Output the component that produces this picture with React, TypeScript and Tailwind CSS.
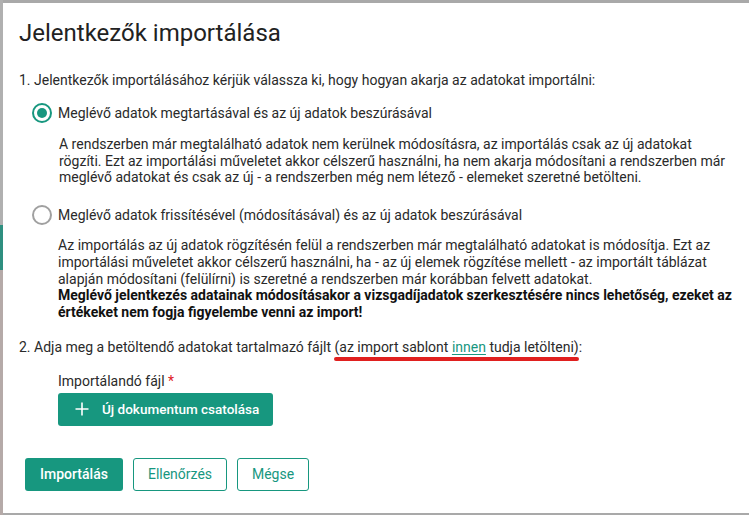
import React from "react";

function Radio({ checked }: { checked?: boolean }) {
  return (
    <span
      className={
        "flex h-[20px] w-[20px] shrink-0 items-center justify-center rounded-full border-2 " +
        (checked ? "border-[#17977f]" : "border-[#a0a0a0]")
      }
    >
      {checked && <span className="h-[10px] w-[10px] rounded-full bg-[#17977f]" />}
    </span>
  );
}

export default function App() {
  return (
    <div
      className="relative flex h-[515px] w-[749px] overflow-hidden bg-[#a9a9a9]"
      style={{ fontFamily: "Roboto, 'Liberation Sans', sans-serif" }}
    >
      <div className="flex w-[3px] shrink-0 flex-col">
        <div className="h-[225px] bg-[#b0b0b0]" />
        <div className="h-[45px] bg-[#2f8f80]" />
        <div className="flex-1 bg-[#b5aaa8]" />
      </div>
      <div className="mt-[3px] mb-[2px] flex flex-1 flex-col bg-white pl-[16px] pr-[8px] pt-[16px] text-[14px] text-[#2a2a2a]">
        <h1 className="text-[24px] leading-[28px] font-normal text-[#222]">Jelentkezők importálása</h1>

        <p className="mt-[25px] leading-[16px]">
          1. Jelentkezők importálásához kérjük válassza ki, hogy hogyan akarja az adatokat importálni:
        </p>

        <div className="mt-[15px] flex items-center gap-[6px] pl-[13px]">
          <Radio checked />
          <span className="leading-[16px]">Meglévő adatok megtartásával és az új adatok beszúrásával</span>
        </div>
        <p className="mt-[13px] pl-[40px] leading-[16.7px]">
          A rendszerben már megtalálható adatok nem kerülnek módosításra, az importálás csak az új adatokat
          <br />
          rögzíti. Ezt az importálási műveletet akkor célszerű használni, ha nem akarja módosítani a rendszerben már
          <br />
          meglévő adatokat és csak az új - a rendszerben még nem létező - elemeket szeretné betölteni.
        </p>

        <div className="mt-[19px] flex items-center gap-[6px] pl-[13px]">
          <Radio />
          <span className="leading-[16px]">Meglévő adatok frissítésével (módosításával) és az új adatok beszúrásával</span>
        </div>
        <div className="mt-[12px] pl-[39px] leading-[16.7px]">
          <p>
            Az importálás az új adatok rögzítésén felül a rendszerben már megtalálható adatokat is módosítja. Ezt az
            importálási műveletet akkor célszerű használni, ha - az új elemek rögzítése mellett - az importált táblázat
            alapján módosítani (felülírni) is szeretné a rendszerben már korábban felvett adatokat.
          </p>
          <p className="font-bold text-[#111]">
            Meglévő jelentkezés adatainak módosításakor a vizsgadíjadatok szerkesztésére nincs lehetőség, ezeket az
            értékeket nem fogja figyelembe venni az import!
          </p>
        </div>

        <p className="mt-[18px] leading-[16px]">
          2. Adja meg a betöltendő adatokat tartalmazó fájlt{" "}
          <span className="relative">
            (az import sablont{" "}
            <a className="text-[#17977f] underline decoration-[#17977f] underline-offset-2">innen</a> tudja letölteni)
            <span className="absolute left-[-1px] right-[0px] bottom-[-6px] h-[4px] rounded-full bg-[#e0201f]" />
          </span>
          :
        </p>

        <div className="mt-[18px] pl-[39px] leading-[16px]">
          Importálandó fájl <span className="text-[#e0201f]">*</span>
        </div>
        <div className="mt-[4px] pl-[39px]">
          <button className="flex h-[33px] items-center gap-[13px] rounded-[3px] bg-[#17977f] pl-[17px] pr-[14px] text-[13.5px] font-medium text-white">
            <svg width="14" height="14" viewBox="0 0 14 14" fill="none" stroke="white" strokeWidth="1.6">
              <path d="M7 0.5v13M0.5 7h13" />
            </svg>
            Új dokumentum csatolása
          </button>
        </div>

        <div className="mt-[32px] flex gap-[10px] pl-[6px]">
          <button className="h-[33px] w-[98px] rounded-[3px] bg-[#17977f] text-[14px] font-medium text-white">
            Importálás
          </button>
          <button className="h-[33px] w-[94px] rounded-[3px] border-[1.5px] border-[#17977f] bg-white text-[14px] text-[#17977f]">
            Ellenőrzés
          </button>
          <button className="h-[33px] w-[72px] rounded-[3px] border-[1.5px] border-[#17977f] bg-white text-[14px] text-[#17977f]">
            Mégse
          </button>
        </div>
      </div>
    </div>
  );
}
